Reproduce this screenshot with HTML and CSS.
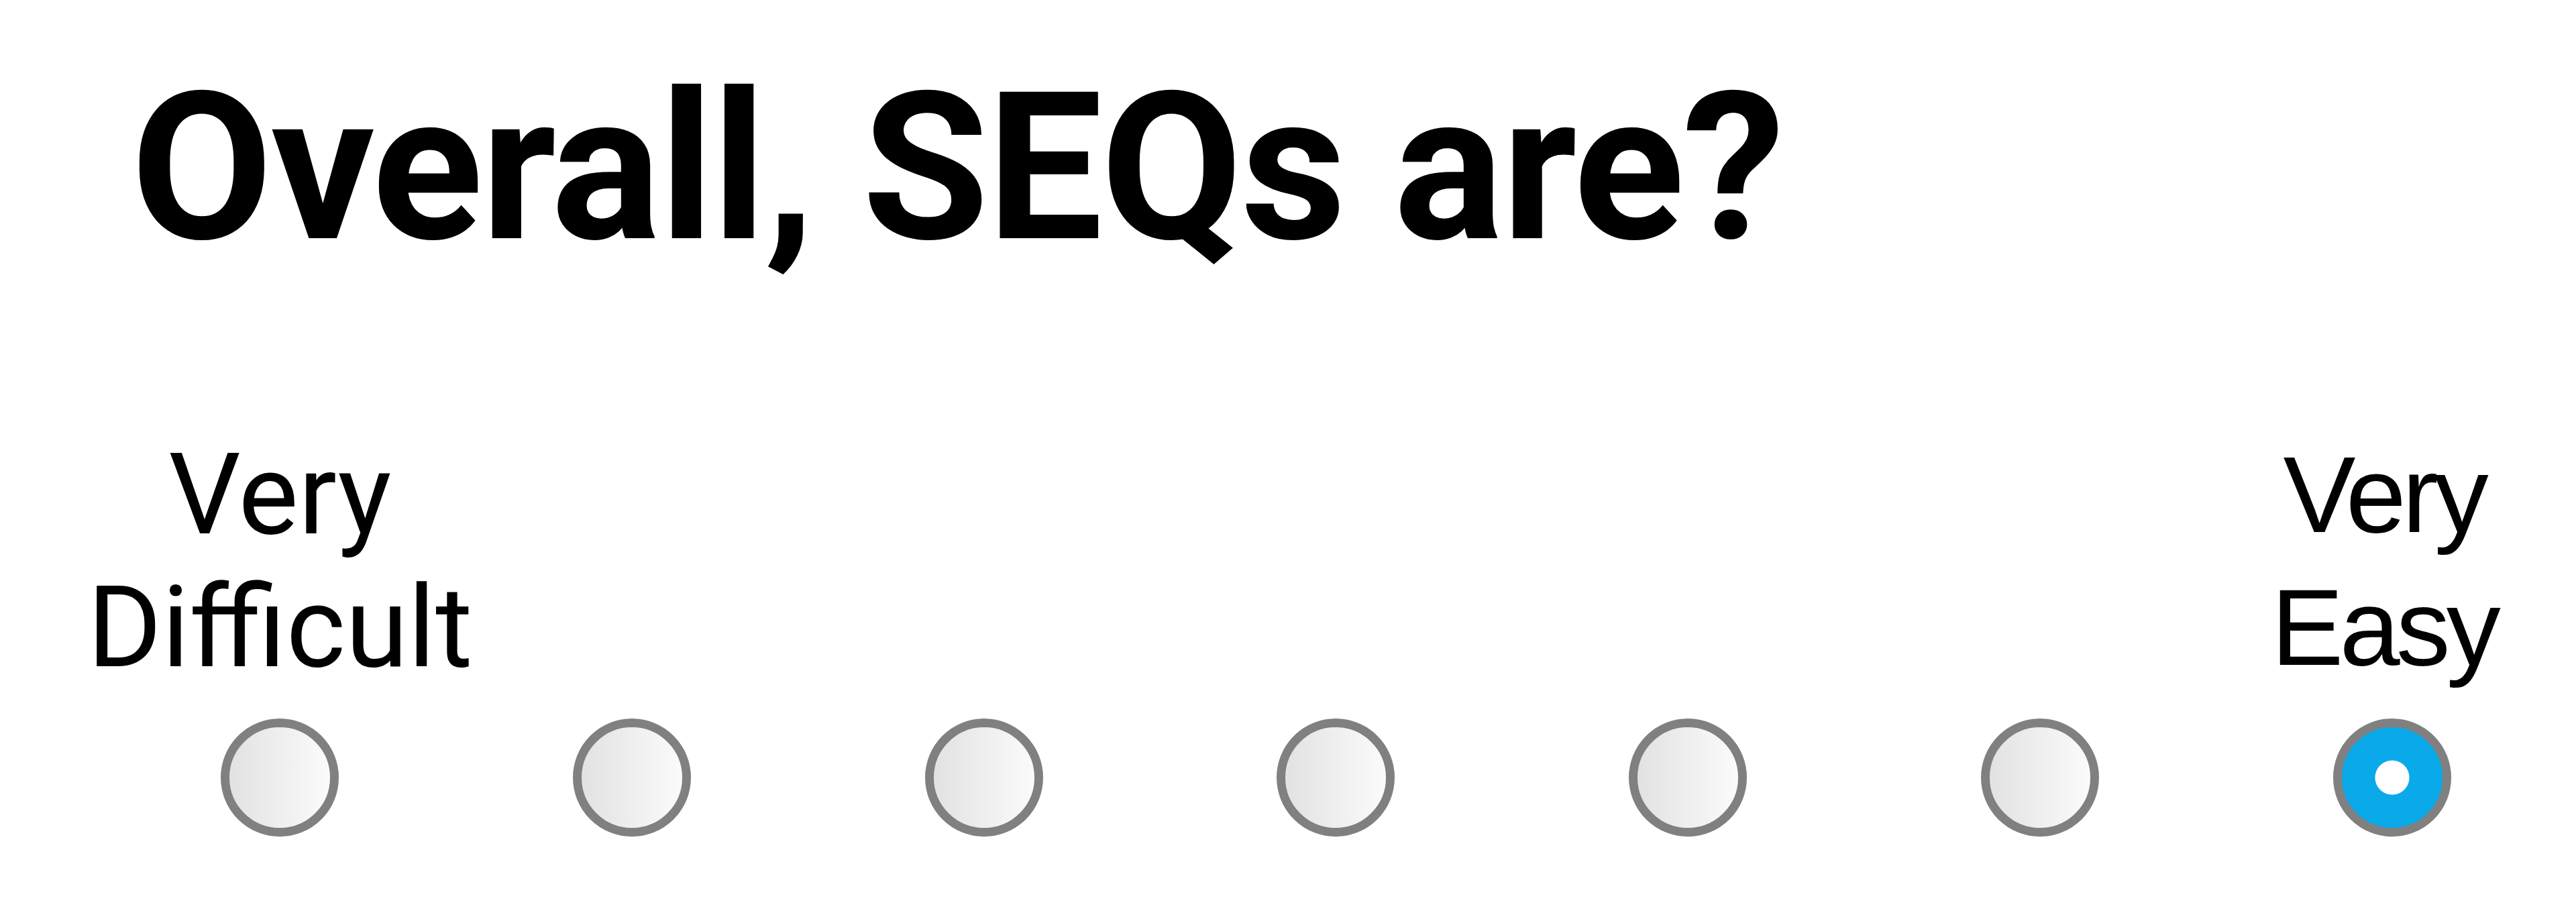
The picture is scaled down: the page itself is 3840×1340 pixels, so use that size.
FILE: index.html
```html
<!DOCTYPE html>
<html lang="en">
<head>
    <meta charset="UTF-8">
    <meta name="viewport" content="width=device-width, initial-scale=1.0">
    <title>SEQ rating</title>
    <link rel="stylesheet" href="styles.css">
</head>
<body>
    <div class="survey">
        <h1 class="question">Overall, SEQs are?</h1>
        <div class="scale">
            <span class="anchor anchor-low">Very<br>Difficult</span>
            <span class="anchor anchor-high">Very<br>Easy</span>

            <input type="radio" name="seq" value="1" aria-label="1">
            <input type="radio" name="seq" value="2" aria-label="2">
            <input type="radio" name="seq" value="3" aria-label="3">
            <input type="radio" name="seq" value="4" aria-label="4">
            <input type="radio" name="seq" value="5" aria-label="5">
            <input type="radio" name="seq" value="6" aria-label="6">
            <input type="radio" name="seq" value="7" aria-label="7" checked>
        </div>
    </div>
</body>
</html>
```

FILE: styles.css
```css
body {
    margin: 0;
    background-color: #fff;
    color: #000;
    font-family: Roboto, "Liberation Sans", sans-serif;
}
.survey {
    padding: 97px 12px 0 155px;
}
.question {
    margin: 0 0 0 40px;
    font-size: 307px;
    line-height: 307px;
    font-weight: 700;
    letter-spacing: -3px;
}
.scale {
    display: grid;
    grid-template-columns: repeat(7, minmax(0, 1fr));
    grid-template-rows: 396px 176px;
    row-gap: 37px;
    margin-top: 234px;
    justify-items: center;
}
.anchor {
    grid-row: 1;
    text-align: center;
    font-size: 169px;
    line-height: 198px;
    white-space: nowrap;
}
.anchor-low {
    grid-column: 1;
    font-family: Roboto, sans-serif;
}
.anchor-high {
    grid-column: 7;
    margin-right: 24px;
    font-family: "Liberation Sans", Arial, sans-serif;
    font-size: 162px;
    letter-spacing: -6px;
}
.scale input {
    grid-row: 2;
    appearance: none;
    -webkit-appearance: none;
    margin: 0;
    width: 176px;
    height: 176px;
    box-sizing: border-box;
    border: 13px solid #808080;
    border-radius: 50%;
    background: linear-gradient(to right, #e2e2e2, #fbfbfb);
}
.scale input:checked {
    background: radial-gradient(circle, #fff 0 25px, #0aa9ea 26px);
}
```
